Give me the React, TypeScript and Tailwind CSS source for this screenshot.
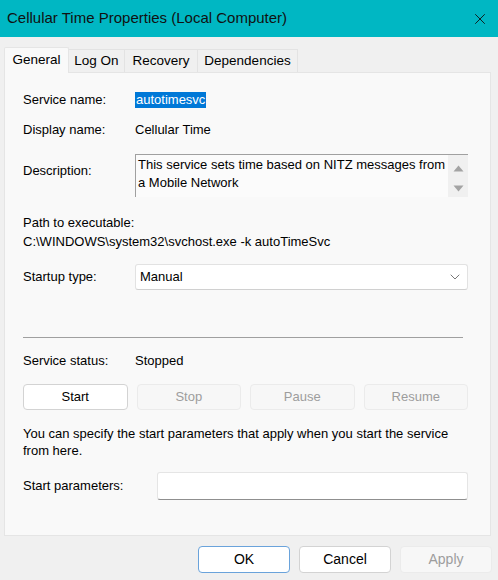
import { ChevronDown, X } from 'lucide-react';

const font = { fontFamily: '"Liberation Sans", Arial, sans-serif' };

function Tab({ label, width, active }: { label: string; width: string; active?: boolean }) {
  return active ? (
    <div className={`h-[26px] ${width} flex items-center justify-center bg-[#f9f9f9] border border-b-0 border-[#e5e5e5] rounded-t-[2px] relative top-px`}>
      {label}
    </div>
  ) : (
    <div className={`h-[23px] ${width} flex items-center justify-center bg-[#f0f0f0] border border-b-0 border-[#e3e3e3] -ml-px`}>
      {label}
    </div>
  );
}

function Btn({ label, disabled, primary, className = '' }: { label: string; disabled?: boolean; primary?: boolean; className?: string }) {
  const tone = disabled
    ? 'bg-[#f7f7f7] border-[#ebebeb] text-[#9d9d9d]'
    : primary
      ? 'bg-white border-[#6aa3db] text-black'
      : 'bg-white border-[#d3d3d3] text-black';
  return (
    <div className={`flex items-center justify-center border rounded-[4px] ${tone} ${className}`}>
      {label}
    </div>
  );
}

export default function App() {
  return (
    <div className="w-[498px] h-[580px] bg-[#f0f0f0] text-[13px] text-black flex flex-col overflow-hidden" style={font}>
      {/* Title bar */}
      <div className="h-[37px] bg-[#00b7c3] flex items-center justify-between pl-[7px] pr-[9px] shrink-0">
        <span className="text-[15px] text-[#111]">Cellular Time Properties (Local Computer)</span>
        <X size={18} strokeWidth={1.2} className="text-[#111]" />
      </div>

      {/* Tabs */}
      <div className="flex items-end pl-[4px] pt-[9px] h-[35px] shrink-0 text-[13.5px]">
        <Tab label="General" width="w-[65px]" active />
        <Tab label="Log On" width="w-[57px]" />
        <Tab label="Recovery" width="w-[74px]" />
        <Tab label="Dependencies" width="w-[101px]" />
      </div>

      {/* Panel */}
      <div className="mx-[4px] mr-[7px] bg-[#f9f9f9] border border-[#e5e5e5] pl-[18px] pr-[22px] pt-[19px] h-[464px] shrink-0">
        <div className="flex h-[16px] items-center">
          <span className="w-[112px]">Service name:</span>
          <span className="bg-[#0078d7] text-white px-px h-[16px] flex items-center">autotimesvc</span>
        </div>
        <div className="flex h-[16px] items-center mt-[14px]">
          <span className="w-[112px]">Display name:</span>
          <span>Cellular Time</span>
        </div>
        <div className="flex mt-[16px]">
          <span className="w-[112px] pt-[7px]">Description:</span>
          <div className="flex-1 h-[43px] flex border-t border-l border-[#a0a0a0] bg-[#fbfbfb]">
            <div className="flex-1 pl-[2px] pt-[1px] leading-[18px]">
              This service sets time based on NITZ messages from a Mobile Network
            </div>
            <div className="w-[20px] bg-[#f0f0f0] flex flex-col items-center gap-[13px] pt-[10px]">
              <svg width="11" height="7" viewBox="0 0 11 7"><path d="M5.5 0.5 L10.5 6.5 H0.5 Z" fill="#a3a3a3" /></svg>
              <svg width="11" height="7" viewBox="0 0 11 7"><path d="M0.5 0.5 H10.5 L5.5 6.5 Z" fill="#a3a3a3" /></svg>
            </div>
          </div>
        </div>
        <div className="mt-[16px] leading-[19px]">
          <div>Path to executable:</div>
          <div>C:\WINDOWS\system32\svchost.exe -k autoTimeSvc</div>
        </div>
        <div className="flex mt-[13px] items-center">
          <span className="w-[112px]">Startup type:</span>
          <div className="flex-1 h-[26px] bg-white border border-[#e2e2e2] border-b-[#d0d0d0] rounded-[3px] flex items-center justify-between pl-[4px] pr-[4px]">
            <span>Manual</span>
            <ChevronDown size={16} strokeWidth={1.2} className="text-[#555]" />
          </div>
        </div>
        <div className="mt-[47px] h-px bg-[#a0a0a0] mr-[5px]" />
        <div className="flex h-[16px] items-center mt-[15px]">
          <span className="w-[112px]">Service status:</span>
          <span>Stopped</span>
        </div>
        <div className="grid grid-cols-4 gap-[9px] mt-[15px] h-[26px]">
          <Btn label="Start" />
          <Btn label="Stop" disabled />
          <Btn label="Pause" disabled />
          <Btn label="Resume" disabled />
        </div>
        <div className="mt-[15px] leading-[17px]">
          You can specify the start parameters that apply when you start the service from here.
        </div>
        <div className="flex items-center mt-[13px]">
          <span className="w-[134px]">Start parameters:</span>
          <div className="flex-1 h-[28px] bg-white border border-[#e5e5e5] border-b-[#8f8f8f] rounded-[3px]" />
        </div>
      </div>

      {/* Dialog buttons */}
      <div className="flex justify-end gap-[9px] pr-[6px] mt-[10px]">
        <Btn label="OK" primary className="w-[92px] h-[27px] text-[14px]" />
        <Btn label="Cancel" className="w-[92px] h-[27px] text-[14px]" />
        <Btn label="Apply" disabled className="w-[92px] h-[27px] text-[14px]" />
      </div>
    </div>
  );
}
